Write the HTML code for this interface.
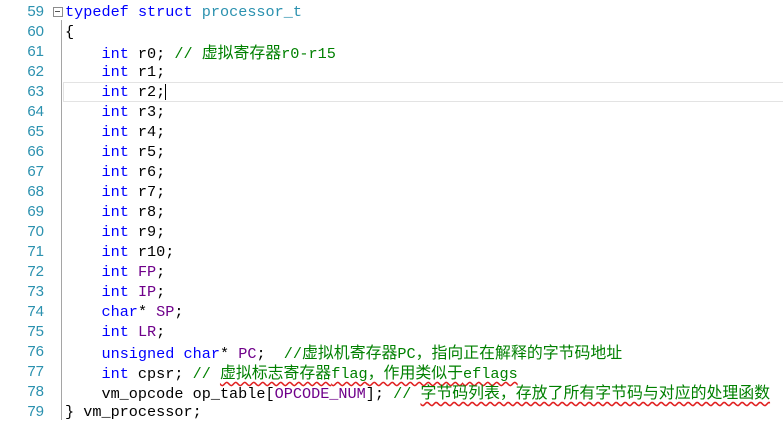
<html><head><style>
body{margin:0;width:783px;height:425px;background:#fff;overflow:hidden;position:relative;font-family:"Liberation Mono","Noto Sans CJK SC",monospace;font-size:15.2px}
.ln{position:absolute;left:0;width:44px;text-align:right;color:#2b91af;font-family:"Liberation Sans",sans-serif;font-size:15px;line-height:20px;height:20px}
.c{position:absolute;left:65px;white-space:pre;color:#000;line-height:20px;height:20px}
.k{color:#0000ff}.m{color:#6f008a}.g{color:#008000}
.w{text-decoration:underline wavy #e02020;text-decoration-skip-ink:none;text-underline-offset:3px}
.cj{font-family:"Noto Sans CJK SC",sans-serif;font-size:15.9px;line-height:20px}
</style></head><body>
<div style="position:absolute;left:61px;top:20px;width:1px;height:400px;background:#a5a5a5"></div>
<div style="position:absolute;left:53px;top:7px;width:8px;height:8px;border:1px solid #8c8c8c;background:#fff"></div>
<div style="position:absolute;left:55px;top:11px;width:5px;height:1px;background:#555"></div>
<div style="position:absolute;left:63px;top:82px;width:720px;height:18px;border:1px solid #e3e3e3;border-right:none"></div>
<div style="position:absolute;left:165px;top:84px;width:1px;height:16px;background:#000"></div>
<div id="x"></div>
<script>
const L=[
'<span class=k>typedef</span> <span class=k>struct</span> <span style="color:#2b91af">processor_t</span>',
'{',
'    <span class=k>int</span> r0; <span class=g>// <span class=cj>虚拟寄存器</span>r0-r15</span>',
'    <span class=k>int</span> r1;','    <span class=k>int</span> r2;','    <span class=k>int</span> r3;','    <span class=k>int</span> r4;','    <span class=k>int</span> r5;','    <span class=k>int</span> r6;','    <span class=k>int</span> r7;','    <span class=k>int</span> r8;','    <span class=k>int</span> r9;','    <span class=k>int</span> r10;',
'    <span class=k>int</span> <span class=m>FP</span>;','    <span class=k>int</span> <span class=m>IP</span>;','    <span class=k>char</span>* <span class=m>SP</span>;','    <span class=k>int</span> <span class=m>LR</span>;',
'    <span class=k>unsigned</span> <span class=k>char</span>* <span class=m>PC</span>;  <span class=g>//<span class=cj>虚拟机寄存器</span>PC<span class=cj>，指向正在解释的字节码地址</span></span>',
'    <span class=k>int</span> cpsr; <span class=g>// <span class="w"><span class=cj>虚拟标志寄存器</span>flag<span class=cj>，作用类似于</span>eflags</span></span>',
'    vm_opcode op_table[<span class=m>OPCODE_NUM</span>]; <span class=g>// <span class="w cj">字节码列表，存放了所有字节码与对应的处理函数</span></span>',
'} vm_processor;'];
let h='';L.forEach((s,i)=>{const t=2+i*20;h+=`<div class=ln style="top:${t}px">${59+i}</div><div class=c style="top:${t}px">${s}</div>`});
document.getElementById('x').innerHTML=h;
</script>
</body></html>
